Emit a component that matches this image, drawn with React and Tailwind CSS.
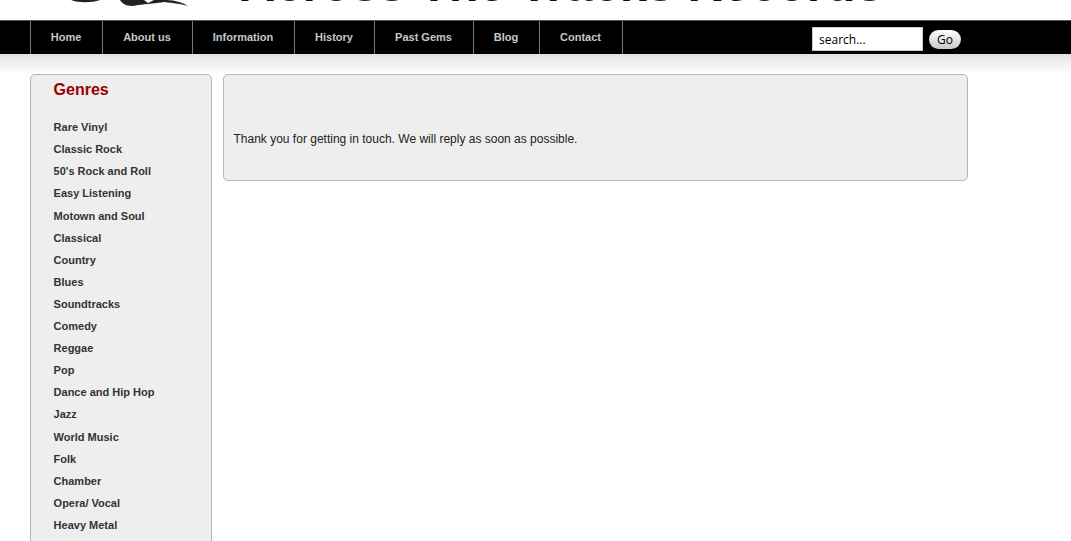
const nav = [
  ["Home", "w-[72px]"],
  ["About us", "w-[90px]"],
  ["Information", "w-[102px]"],
  ["History", "w-[80px]"],
  ["Past Gems", "w-[99px]"],
  ["Blog", "w-[66px]"],
  ["Contact", "w-[83px]"],
];
const genres = ["Rare Vinyl","Classic Rock","50's Rock and Roll","Easy Listening","Motown and Soul","Classical","Country","Blues","Soundtracks","Comedy","Reggae","Pop","Dance and Hip Hop","Jazz","World Music","Folk","Chamber","Opera/ Vocal","Heavy Metal"];

export default function App() {
  return (
    <div className="h-[541px] overflow-hidden bg-white font-['Liberation_Sans',Arial,sans-serif]">
      <header className="flex h-[20px] overflow-hidden bg-white pl-[68px]">
        <svg width="122" height="8" viewBox="0 0 122 8" className="shrink-0">
          <path d="M3 0C10 3 24 3 32 0Z" fill="#222" />
          <path d="M52 0C56 6 62 7 70 5C78 4 90 3 96 2C106 3 113 4 120 6C112 1 104 0 96 0L86 0L80 3L76 0Z" fill="#222" />
        </svg>
        <div className="ml-[50px] mt-[-41px] whitespace-nowrap text-[48.8px] leading-[50px] font-bold text-[#111]">Across The Tracks Records</div>
      </header>
      <nav className="flex h-[34px] items-stretch border-t border-[#555] bg-black pl-[30px]">
        {nav.map(([label, w]) => (
          <a key={label} className={`${w} flex h-[33px] items-center justify-center border-l border-[#777] pr-[1px] pb-[1px] text-[11px] font-bold text-[#c8c8c8]`}>{label}</a>
        ))}
        <div className="w-0 border-l border-[#777]" />
        <div className="ml-[189px] flex items-center pt-[3px]">
          <input readOnly value="search..." className="h-[24px] w-[111px] border border-[#ccc] bg-white px-[6px] font-['Open_Sans','DejaVu_Sans',sans-serif] text-[12px] text-black outline-none" />
          <button className="ml-[6px] h-[19px] w-[32px] rounded-[10px] bg-gradient-to-b from-white to-[#c8c8c8] font-['Open_Sans','DejaVu_Sans',sans-serif] text-[12px] leading-[19px] text-black">Go</button>
        </div>
      </nav>
      <div className="flex items-start gap-[11px] bg-gradient-to-b from-[#e2e2e2] to-white to-[20px] px-[30px] pt-[20px]">
        <aside className="h-[520px] w-[182px] shrink-0 rounded-t-[5px] border border-[#b5b5b5] bg-[#eeeeee] pl-[22.6px]">
          <h2 className="mt-[5px] text-[16px] leading-[20px] font-bold text-[#990000]">Genres</h2>
          <ul className="mt-[16.19px]">
            {genres.map((g) => (
              <li key={g} className="h-[22.1px] text-[11px] leading-[22px] font-bold text-[#333]">{g}</li>
            ))}
          </ul>
        </aside>
        <main className="flex h-[107px] w-[745px] items-center rounded-[5px] border border-[#b5b5b5] bg-[#eeeeee] pl-[9.5px] pt-[22px] text-[12px] text-[#222]">
          Thank you for getting in touch. We will reply as soon as possible.
        </main>
      </div>
    </div>
  );
}
